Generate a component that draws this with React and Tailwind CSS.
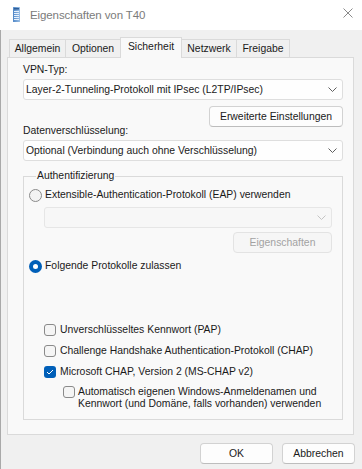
import React from "react";

function Chevron({ color = "#5f5f5f" }) {
  return (
    <svg width="9" height="5" viewBox="0 0 9 5" fill="none">
      <path d="M0.5 0.5 L4.5 4.5 L8.5 0.5" stroke={color} strokeWidth="1" />
    </svg>
  );
}

function Select({ children, disabled, className = "" }) {
  return (
    <div
      className={
        "flex items-center justify-between h-[21px] rounded-[3px] border pl-[2px] pr-[5px] " +
        (disabled
          ? "border-[#e6e6e6] bg-[#f7f7f7] "
          : "border-[#dedede] bg-[#fefefe] ") +
        className
      }
    >
      <span className="whitespace-nowrap">{children}</span>
      <Chevron color={disabled ? "#c4c4c4" : "#5f5f5f"} />
    </div>
  );
}

function Button({ children, disabled, className = "" }) {
  return (
    <div
      className={
        "flex items-center justify-center h-[21px] rounded-[4px] border " +
        (disabled
          ? "border-[#e3e3e3] bg-[#f6f6f6] text-[#a2a2a2] "
          : "border-[#d2d2d2] border-b-[#bdbdbd] bg-[#fdfdfd] ") +
        className
      }
    >
      {children}
    </div>
  );
}

function Radio({ checked }) {
  if (checked) {
    return (
      <div className="w-[13px] h-[13px] rounded-full bg-[#005fb8] flex items-center justify-center shrink-0">
        <div className="w-[5px] h-[5px] rounded-full bg-white" />
      </div>
    );
  }
  return (
    <div className="w-[13px] h-[13px] rounded-full border border-[#8a8a8a] bg-[#f3f3f3] shrink-0" />
  );
}

function Checkbox({ checked }) {
  if (checked) {
    return (
      <div className="w-[12px] h-[12px] rounded-[3px] bg-[#005fb8] flex items-center justify-center shrink-0">
        <svg width="8" height="6" viewBox="0 0 8 6" fill="none">
          <path d="M1 3 L3 5 L7 1" stroke="white" strokeWidth="1" />
        </svg>
      </div>
    );
  }
  return (
    <div className="w-[12px] h-[12px] rounded-[3px] border border-[#8a8a8a] bg-[#f5f5f5] shrink-0" />
  );
}

function Tab({ label, active, w }) {
  if (active) {
    return (
      <div
        className={
          "relative z-10 -ml-px -mb-px h-[21px] border border-b-0 border-[#dadada] bg-[#f9f9f9] flex items-start justify-center pt-[2px] " +
          w
        }
      >
        {label}
      </div>
    );
  }
  return (
    <div
      className={
        "-ml-px first:ml-0 h-[18px] border border-b-0 border-[#dadada] bg-[#f0f0f0] flex items-center justify-center pt-[1px] " +
        w
      }
    >
      {label}
    </div>
  );
}

export default function App() {
  return (
    <div className="w-[362px] h-[469px] bg-[#f0f0f0] flex flex-col font-['Liberation_Sans',Arial,sans-serif] text-[10.4px] leading-[14px] text-[#1a1a1a] overflow-hidden">
      {/* Title bar */}
      <div className="h-[30px] bg-white flex items-center shrink-0">
        <div className="ml-[13px] mt-[-2px]">
          <svg width="7" height="15" viewBox="0 0 7 15">
            <defs>
              <linearGradient id="g" x1="0" y1="0" x2="1" y2="0">
                <stop offset="0" stopColor="#4f86c6" />
                <stop offset="1" stopColor="#9cc0e6" />
              </linearGradient>
            </defs>
            <rect x="0" y="0" width="7" height="15" rx="0.5" fill="url(#g)" />
            <rect x="1" y="1" width="5" height="1.5" fill="#2e5f99" />
            <rect x="1" y="4" width="5" height="1" fill="#e8f1fb" />
            <rect x="1" y="6" width="5" height="1" fill="#e8f1fb" />
            <rect x="1" y="8" width="5" height="1" fill="#e8f1fb" />
            <rect x="1" y="10" width="5" height="1" fill="#e8f1fb" />
            <rect x="1" y="12" width="5" height="1" fill="#e8f1fb" />
          </svg>
        </div>
        <div className="ml-[10px] text-[11.5px] text-[#7b7b7b] tracking-[-0.1px]">
          Eigenschaften von T40
        </div>
        <div className="ml-auto mr-[9px] mt-[-5px]">
          <svg width="10" height="10" viewBox="0 0 10 10">
            <path d="M0.5 0.5 L9.5 9.5 M9.5 0.5 L0.5 9.5" stroke="#8a8a8a" strokeWidth="1" />
          </svg>
        </div>
      </div>

      {/* Body */}
      <div className="flex-1 flex flex-col border-l border-[#a9a9a9]">
        {/* Tabs */}
        <div className="pt-[6px] pl-[8px] flex items-end h-[27px]">
          <Tab label="Allgemein" w="w-[57px]" />
          <Tab label="Optionen" w="w-[56px]" />
          <Tab label="Sicherheit" active w="w-[62px]" />
          <Tab label="Netzwerk" w="w-[56px]" />
          <Tab label="Freigabe" w="w-[54px]" />
        </div>

        {/* Panel */}
        <div className="ml-[6px] w-[347px] h-[378px] border border-[#dadada] bg-[#f9f9f9] pl-[15px] flex flex-col">
          <div className="mt-[5px] h-[14px]">VPN-Typ:</div>
          <Select className="mt-[2px] w-[320px]">
            Layer-2-Tunneling-Protokoll mit IPsec (L2TP/IPsec)
          </Select>
          <div className="mt-[6px] w-[320px] flex justify-end">
            <Button className="w-[134px] h-[20px]">Erweiterte Einstellungen</Button>
          </div>
          <div className="mt-[-3px] h-[14px]">Datenverschlüsselung:</div>
          <Select className="mt-[2px] w-[320px]">
            Optional (Verbindung auch ohne Verschlüsselung)
          </Select>

          <fieldset className="mt-[8px] w-[320px] h-[251px] border border-[#dadada] pl-[5px]">
            <legend className="ml-[7px] px-[1px] h-[14px] leading-[14px]">
              Authentifizierung
            </legend>
            <div className="mt-[4px] h-[16px] flex items-center">
              <Radio />
              <span className="ml-[3px]">
                Extensible-Authentication-Protokoll (EAP) verwenden
              </span>
            </div>
            <Select disabled className="mt-[4px] ml-[15px] w-[288px]">
              {""}
            </Select>
            <div className="mt-[4px] ml-[15px] w-[288px] flex justify-end">
              <Button disabled className="w-[99px] h-[20px]">
                Eigenschaften
              </Button>
            </div>
            <div className="mt-[5px] h-[16px] flex items-center">
              <Radio checked />
              <span className="ml-[3px]">Folgende Protokolle zulassen</span>
            </div>

            <div className="mt-[48px] ml-[15px] h-[16px] flex items-center">
              <Checkbox />
              <span className="ml-[4px]">Unverschlüsseltes Kennwort (PAP)</span>
            </div>
            <div className="mt-[5px] ml-[15px] h-[16px] flex items-center">
              <Checkbox />
              <span className="ml-[4px]">
                Challenge Handshake Authentication-Protokoll (CHAP)
              </span>
            </div>
            <div className="mt-[5px] ml-[15px] h-[16px] flex items-center">
              <Checkbox checked />
              <span className="ml-[4px]">Microsoft CHAP, Version 2 (MS-CHAP v2)</span>
            </div>
            <div className="mt-[6px] ml-[34px] flex items-start">
              <Checkbox />
              <span className="ml-[3px] leading-[12px]">
                Automatisch eigenen Windows-Anmeldenamen und
                <br />
                Kennwort (und Domäne, falls vorhanden) verwenden
              </span>
            </div>
          </fieldset>
        </div>

        {/* Bottom buttons */}
        <div className="mt-[8px] pr-[7px] flex justify-end gap-[9px]">
          <Button className="w-[73px]">OK</Button>
          <Button className="w-[73px]">Abbrechen</Button>
        </div>
      </div>
    </div>
  );
}
